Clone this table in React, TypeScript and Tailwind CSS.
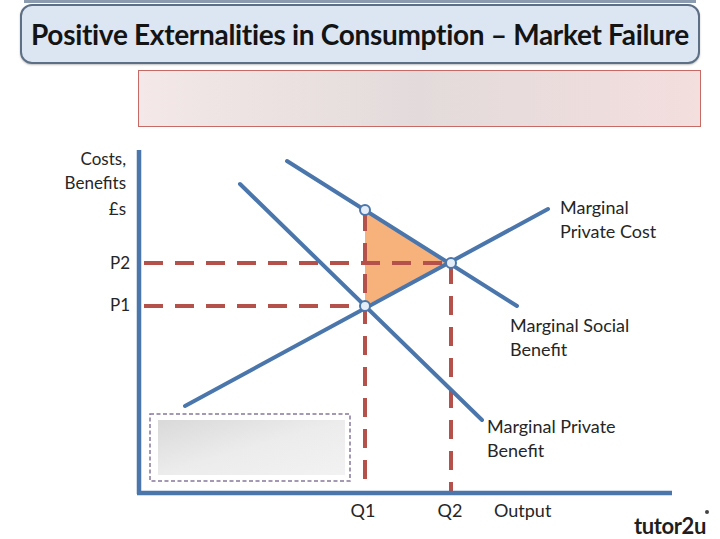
import React from 'react';

const blue = '#4a76ab';
const red = '#b5514b';
const font = 'Lato, "Open Sans", "Liberation Sans", sans-serif';

export default function App() {
    return (
        <div className="relative flex flex-col w-[720px] h-[539px] overflow-hidden bg-white" style={{ fontFamily: font }}>
            {/* edge of the slide above */}
            <div className="absolute top-0 left-[24px] right-[24px] h-[3px] bg-[#8c9bb0]" />

            {/* Title */}
            <div className="mx-[20px] mt-[4px] h-[60px] rounded-[12px] border-2 border-[#5d6f85] bg-[#dce6f2] flex items-center justify-center shadow-[0_1px_2px_rgba(0,0,0,0.25)]">
                <h1 className="text-[28px] font-bold text-[#141414] tracking-[-0.3px] leading-none">
                    Positive Externalities in Consumption – Market Failure
                </h1>
            </div>

            {/* Blurred caption box */}
            <div className="ml-[138px] mr-[19px] mt-[6px] h-[57px] border border-[#c76a66] bg-gradient-to-r from-[#f4e8e8] via-[#e3dbdb] to-[#f4dede]" />

            {/* Diagram */}
            <svg className="flex-1 w-full" viewBox="0 127 720 412" fontFamily={font}>
                {/* labels on the y axis */}
                <g fontSize="17" fill="#262626" textAnchor="end">
                    <text x="126" y="165">Costs,</text>
                    <text x="126" y="189">Benefits</text>
                    <text x="126" y="215">£s</text>
                    <text x="130" y="269">P2</text>
                    <text x="130" y="311">P1</text>
                </g>

                {/* welfare gain triangle */}
                <polygon points="365,210 450,263 365,306" fill="#f7b27c" />

                {/* dashed guides */}
                <g stroke={red} strokeWidth="4" strokeDasharray="19 12">
                    <line x1="144" y1="263" x2="450" y2="263" />
                    <line x1="144" y1="306" x2="365" y2="306" />
                    <line x1="365" y1="212" x2="365" y2="492" />
                    <line x1="451" y1="265" x2="451" y2="492" />
                </g>

                {/* curves */}
                <g stroke={blue} strokeWidth="4" strokeLinecap="round">
                    <line x1="185" y1="406" x2="548" y2="209" />
                    <line x1="287" y1="161" x2="517" y2="306" />
                    <line x1="240" y1="184" x2="482" y2="420" />
                </g>

                {/* axes */}
                <g stroke={blue} strokeWidth="4.5">
                    <line x1="139" y1="150" x2="139" y2="494" />
                    <line x1="137" y1="493" x2="672" y2="493" />
                </g>

                {/* intersections */}
                <g fill="#e3ecf7" stroke={blue} strokeWidth="2">
                    <circle cx="365" cy="210" r="5" />
                    <circle cx="451" cy="263" r="5" />
                    <circle cx="365" cy="306" r="5" />
                </g>

                {/* blurred legend box */}
                <rect x="150" y="414" width="200" height="67" fill="none" stroke="#85789a" strokeWidth="1.5" strokeDasharray="4 2.5" />
                <defs>
                    <linearGradient id="g" x1="0" x2="1" y1="0" y2="1">
                        <stop offset="0" stopColor="#d9d9d9" />
                        <stop offset="0.5" stopColor="#ececec" />
                        <stop offset="1" stopColor="#f2f2f2" />
                    </linearGradient>
                </defs>
                <rect x="158" y="420" width="187" height="55" fill="url(#g)" />

                {/* curve labels */}
                <g fontSize="18" fill="#262626">
                    <text x="560" y="214">Marginal</text>
                    <text x="560" y="238">Private Cost</text>
                    <text x="510" y="332">Marginal Social</text>
                    <text x="510" y="356">Benefit</text>
                    <text x="487" y="433">Marginal Private</text>
                    <text x="487" y="457">Benefit</text>
                    <text x="363" y="517" textAnchor="middle">Q1</text>
                    <text x="450" y="517" textAnchor="middle">Q2</text>
                    <text x="494" y="517">Output</text>
                </g>

                {/* tutor2u logo */}
                <text x="634" y="534" fontSize="22" fontWeight="700" fill="#1f1f1f" letterSpacing="-0.4">tutor2u</text>
                <circle cx="707" cy="512" r="2" fill="#444" />
            </svg>
        </div>
    );
}
